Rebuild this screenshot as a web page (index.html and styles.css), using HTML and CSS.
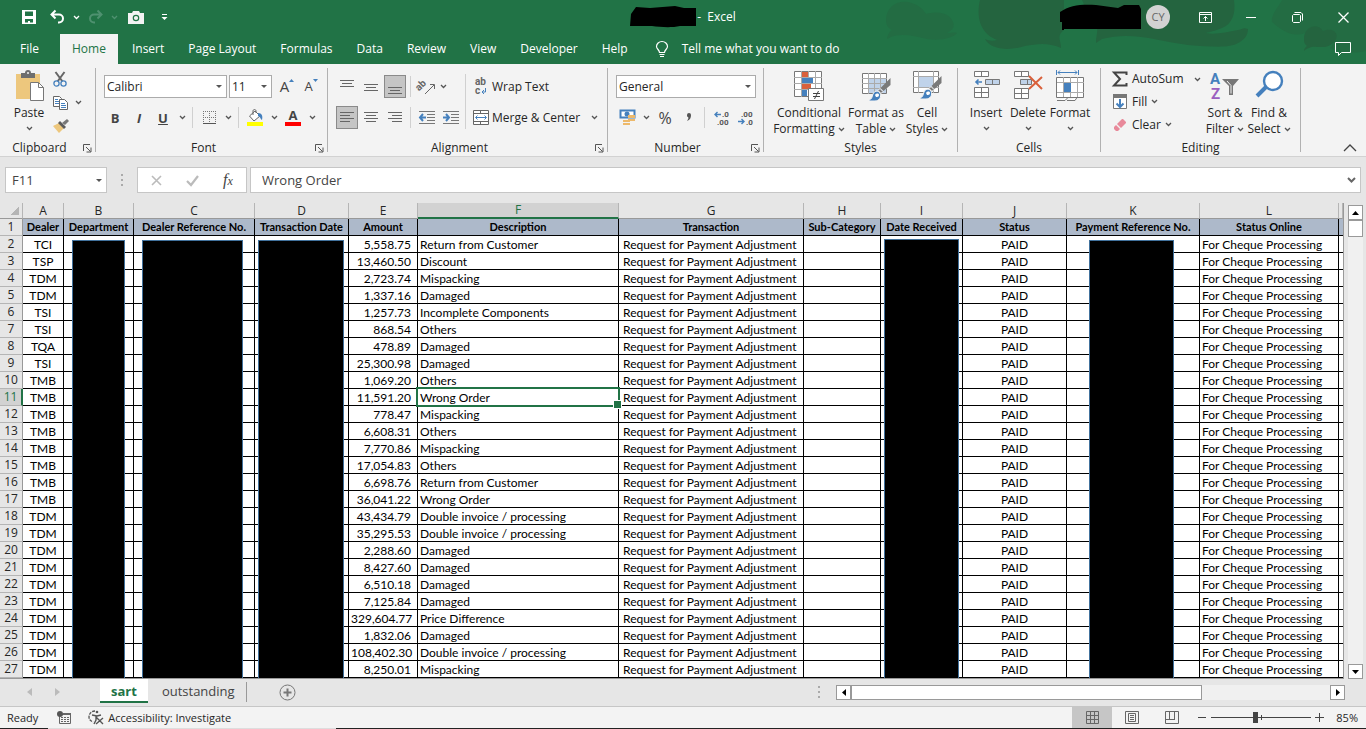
FILE: index.html
```html
<!DOCTYPE html>
<html lang="en">
<head>
	<meta charset="UTF-8">
	<title>Excel</title>
	<link rel="stylesheet" href="styles.css">
</head>
<body>

<svg class="sprite" aria-hidden="true">
	<symbol id="chev" viewBox="0 0 7 5"><path d="M1 1l2.500 2.500L6 1" fill="none" stroke="currentColor" stroke-width="1.300"/></symbol>
	<symbol id="launch" viewBox="0 0 9 9"><path d="M.5 7V.5H7M3 3l4.500 4.500M8 3.500V8H3.500" fill="none" stroke="#555"/></symbol>
	<symbol id="brush" viewBox="0 0 24 24"><path d="M22.500 0v7l-7 6-3-3z" fill="#7a7a7a"/><path d="M12 10.500l3 3-2 2-3-3z" fill="#7a7a7a" stroke="#f3f3f3"/><path d="M1 22c3-1 3-3 4-6 1-3 5-4 7-1 2 4-1 8-5 8H1z" fill="#4580bd" stroke="#f3f3f3"/><path d="M7 17c1-2 4-2 4 0s-2 2-3 2z" fill="#fff"/></symbol>
</svg>

<header class="top">
	<svg class="art" viewBox="0 0 486 64" aria-hidden="true">
		<path d="M6 20C6 8 16 0 28 2c10 2 16 8 18 12 14-4 24 0 27 8 2 6-1 8-6 11 4 0 8-1 10 0-4 5-16 8-30 6-14-3-28-7-40 0 1-5 2-7 5-9-4-2-6-5-6-10z" fill="#236c43"/>
		<path d="M100 0h84v30c-8 6-3 10-3 18-14-6-24-4-36-2-16 5-34 4-40-7 4 2 8 2 12 1-20-8-20-28-17-40z" fill="#24643f"/>
		<path d="M202 0h152c2 14-2 24-12 28-8 3-12 4-16 5 10 2 20-1 32-3 5-1 5-3 10-1 0 8-6 12-10 14-8 5-24 4-50 2-30-4-56-14-86-6-2 1-4 3-6 4 0-10 4-14-2-21-8-10-8-14-12-22z" fill="#24643f"/>
		<path d="M392 22c-1-8 6-14 10-22h84v51c-14 3-26 2-36-3 6-5 4-12-5-13-3-10-16-12-20-2-12 4-20 0-33-11z" fill="#236c43"/>
		<path d="M424 40c-1-14 14-18 19-9 12-5 18 5 10 12-8 8-18 1-24 5-3 1-4 2-5 3 0-3 2-4 3-5-2-2-3-3-3-6z" fill="#24643f"/>
	</svg>
	<div class="titlebar">
		<div class="quick">
			<button aria-label="Save"><svg width="14" height="14"><path d="M0 0h14v14H0zM3 1.500v4.500h8V1.500zM3 9v3.500h3V11h2v1.500h3V9z" fill="#fff" fill-rule="evenodd"/></svg></button>
			<button aria-label="Undo"><svg width="15" height="14"><path d="M1 4.500h8a4 4 0 0 1 0 8H8M5.500.500l-4 4 4 4" fill="none" stroke="#fff" stroke-width="2"/></svg></button>
			<button class="drop" aria-label="Undo list"><svg width="7" height="5"><use href="#chev"/></svg></button>
			<button class="off" aria-label="Redo"><svg width="15" height="14"><path d="M14 4.500H6a4 4 0 0 0 0 8h1M9.500.500l4 4-4 4" fill="none" stroke="currentColor" stroke-width="2"/></svg></button>
			<button class="drop off" aria-label="Redo list"><svg width="7" height="5"><use href="#chev"/></svg></button>
			<button class="camera" aria-label="Camera"><svg width="16" height="13"><path d="M0 2h4l1-2h6l1 2h4v11H0z" fill="#f3f3f3"/><circle cx="8" cy="7" r="2.700" fill="none" stroke="#217346" stroke-width="1.200"/></svg></button>
			<button aria-label="Customize"><svg width="7" height="7"><path d="M1 .500h5" stroke="#fff"/><path d="M.500 3h6l-3 3z" fill="#fff"/></svg></button>
		</div>
		<div class="doc">
			<svg width="67" height="22" aria-hidden="true"><path d="M1 8L6 1l14 1L45 0l9 2h12v18H50c-9 2-20 1-28 0H0z"/></svg>
			<span>-&nbsp; Excel</span>
		</div>
		<div class="account">
			<svg width="82" height="26" aria-hidden="true"><path d="M0 8C10 1 22 0 36 1l22 3 6-3h15l2 4v20H4v1H2v-8H0z"/></svg>
			<span class="avatar">CY</span>
			<div class="window">
				<button aria-label="Ribbon display"><svg width="13" height="11"><path d="M.500.500h12v10H.500zM0 2.500h13M6.500 9V4.500M4.500 6.500l2-2 2 2" fill="none" stroke="#fff"/></svg></button>
				<button aria-label="Minimize"><svg width="10" height="11"><path d="M0 5.500h10" stroke="#fff"/></svg></button>
				<button aria-label="Restore"><svg width="11" height="11"><path d="M.500 3.500l1-1h6l1 1v6l-1 1h-6l-1-1zM2.500.500h6.500l1.500 1.500v6.500" fill="none" stroke="#fff"/></svg></button>
				<button aria-label="Close"><svg width="11" height="11"><path d="M.500.500l10 10M10.500.500l-10 10" stroke="#fff" stroke-width="1.300"/></svg></button>
			</div>
		</div>
	</div>
	<nav class="tabs">
		<a href="#" class="file">File</a>
		<a href="#" class="active">Home</a>
		<a href="#">Insert</a>
		<a href="#">Page Layout</a>
		<a href="#">Formulas</a>
		<a href="#">Data</a>
		<a href="#">Review</a>
		<a href="#">View</a>
		<a href="#">Developer</a>
		<a href="#">Help</a>
		<a href="#" class="tell"><svg width="12" height="17"><path d="M3.500 11.500C3.500 9 .500 8 .500 5.500a5.500 5 0 0 1 11 0c0 2.500-3 3.500-3 6zM3.500 13.500h5M4 15.500h4" fill="none" stroke="#fff" stroke-width="1.200"/></svg>Tell me what you want to do</a>
		<button class="comments" aria-label="Comments"><svg width="16" height="15"><path d="M.500.500h15v10H6.500l-3 3v-3h-3z" fill="none" stroke="#fff"/></svg></button>
	</nav>
</header>

<section class="ribbon">
	<div class="group clipboard">
		<div class="body">
			<button class="big"><svg width="30" height="32"><path d="M2 4h24v25H2z" fill="#edc77d"/><path d="M7 8V3h4a3 3 0 0 1 6 0h4v5z" fill="#6e6e6e"/><circle cx="14" cy="3" r="1" fill="#f3f3f3"/><path d="M16.500 12.500h8l5 5v13h-13z" fill="#fff" stroke="#777"/><path d="M24.500 12.500v5h5" fill="none" stroke="#777"/></svg><span>Paste</span><svg class="chev" width="7" height="5"><use href="#chev"/></svg></button>
			<div class="stack">
				<button aria-label="Cut"><svg width="14" height="15"><path d="M2.500 0l7 9.500M11.500 0l-7 9.500" stroke="#666" stroke-width="2"/><circle cx="3.500" cy="11.500" r="2.600" fill="#f3f3f3" stroke="#4580bd" stroke-width="1.300"/><circle cx="10.500" cy="11.500" r="2.600" fill="#f3f3f3" stroke="#4580bd" stroke-width="1.300"/></svg></button>
				<button aria-label="Copy"><svg width="15" height="14"><path d="M.500.500h6l2 2v8h-8z" fill="#fff" stroke="#666"/><path d="M2 3.500h3M2 5.500h4M2 7.500h4" stroke="#4580bd"/><path d="M6.500 3.500h5l3 3v7h-8z" fill="#fff" stroke="#666"/><path d="M8 7.500h4M8 9.500h5M8 11.500h5" stroke="#4580bd"/></svg><svg class="chev" width="7" height="5"><use href="#chev"/></svg></button>
				<button aria-label="Format painter"><svg width="16" height="14"><path d="M0 7l6-3 5 5-5 5z" fill="#edc77d"/><path d="M5 4l2-2 6 6-2 2z" fill="#5c5c5c"/><path d="M9 4l5-4 2 2-4 4z" fill="#777"/></svg></button>
			</div>
		</div>
		<div class="foot"><span>Clipboard</span><button class="launch" aria-label="Clipboard options"><svg width="9" height="9"><use href="#launch"/></svg></button></div>
	</div>

	<div class="group font">
		<div class="body rows">
			<div class="row">
				<select class="face" aria-label="Font"><option>Calibri</option></select>
				<select class="size" aria-label="Font size"><option>11</option></select>
				<button class="tool grow" aria-label="Increase font size">A<svg width="5" height="3"><path d="M0 3L2.500 0 5 3z" fill="#4580bd"/></svg></button>
				<button class="tool shrink" aria-label="Decrease font size">A<svg width="5" height="3"><path d="M0 0h5L2.500 3z" fill="#4580bd"/></svg></button>
			</div>
			<div class="row">
				<button class="tool"><b>B</b></button>
				<button class="tool"><b><i>I</i></b></button>
				<button class="tool"><b><u>U</u></b></button>
				<button class="arrow" aria-label="Underline list"><svg width="7" height="5"><use href="#chev"/></svg></button>
				<i class="sep"></i>
				<button class="tool" aria-label="Borders"><svg width="13" height="13"><path d="M0 .500h13M0 6.500h13M.500 0v13M6.500 0v13M12.500 0v13" stroke="#777" stroke-dasharray="1 1"/><path d="M0 12.500h13" stroke="#555"/></svg></button>
				<button class="arrow" aria-label="Border list"><svg width="7" height="5"><use href="#chev"/></svg></button>
				<i class="sep"></i>
				<button class="tool" aria-label="Fill color"><svg width="16" height="17"><path d="M2.500 7L8 2l5 5-6 5z" fill="#fff" stroke="#666"/><path d="M6 6V2c0-2 3-2 3 0v2" fill="none" stroke="#666"/><path d="M11 4c4 0 5 3 4 7-2-1-1-3-4-4z" fill="#4580bd"/><path d="M0 13h16v4H0z" fill="#ff0"/></svg></button>
				<button class="arrow" aria-label="Fill colors"><svg width="7" height="5"><use href="#chev"/></svg></button>
				<button class="tool color" aria-label="Font color">A</button>
				<button class="arrow" aria-label="Font colors"><svg width="7" height="5"><use href="#chev"/></svg></button>
			</div>
		</div>
		<div class="foot"><span>Font</span><button class="launch" aria-label="Font options"><svg width="9" height="9"><use href="#launch"/></svg></button></div>
	</div>

	<div class="group align">
		<div class="body">
			<div class="rows">
				<div class="row">
					<button class="tool" aria-label="Top align"><svg width="14" height="14"><path d="M0 .500h14M2 3.500h10M0 6.500h14" stroke="#666"/></svg></button>
					<button class="tool" aria-label="Middle align"><svg width="14" height="14"><path d="M0 4.500h14M2 7.500h10M0 10.500h14" stroke="#666"/></svg></button>
					<button class="tool on" aria-label="Bottom align"><svg width="14" height="14"><path d="M0 7.500h14M2 10.500h10M0 13.500h14" stroke="#666"/></svg></button>
					<i class="sep"></i>
					<button class="tool" aria-label="Orientation"><svg width="17" height="16"><text class="ab" x="-1" y="8" transform="rotate(-45 5 9)">ab</text><path d="M6 15l9-9M11 5.500h4.500V10" fill="none" stroke="#666"/></svg></button>
					<button class="arrow near" aria-label="Orientation list"><svg width="7" height="5"><use href="#chev"/></svg></button>
				</div>
				<div class="row">
					<button class="tool on" aria-label="Align left"><svg width="14" height="12"><path d="M0 .500h14M0 3.500h10M0 6.500h14M0 9.500h10" stroke="#666"/></svg></button>
					<button class="tool" aria-label="Center"><svg width="14" height="12"><path d="M0 .500h14M2 3.500h10M0 6.500h14M2 9.500h10" stroke="#666"/></svg></button>
					<button class="tool" aria-label="Align right"><svg width="14" height="12"><path d="M0 .500h14M4 3.500h10M0 6.500h14M4 9.500h10" stroke="#666"/></svg></button>
					<i class="sep"></i>
					<button class="tool" aria-label="Decrease indent"><svg width="16" height="13"><path d="M0 .500h16M8 3.500h8M8 6.500h8M8 9.500h8M0 12.500h16" stroke="#777"/><path d="M7 6.500H1M4 3L1 6.500 4 10" fill="none" stroke="#4580bd" stroke-width="2"/></svg></button>
					<button class="tool" aria-label="Increase indent"><svg width="16" height="13"><path d="M0 .500h16M8 3.500h8M8 6.500h8M8 9.500h8M0 12.500h16" stroke="#777"/><path d="M0 6.500h6M3 3l3 3.500L3 10" fill="none" stroke="#4580bd" stroke-width="2"/></svg></button>
				</div>
			</div>
			<i class="sep tall"></i>
			<div class="rows">
				<button class="row text"><svg width="16" height="16"><text class="ab" x="2" y="6">ab</text><text class="ab" x="2" y="15">c</text><path d="M12.500 9v4H9M11 11l-2 2 2 2" fill="none" stroke="#4580bd"/></svg>Wrap Text</button>
				<button class="row text"><svg width="16" height="15"><path d="M.500.500h15v14H.500z" fill="#fff" stroke="#666"/><path d="M0 3.500h16M0 11.500h16M7.500 0v3M7.500 12v3" stroke="#666"/><path d="M3 7.500h10M4.500 5.500l-2 2 2 2M11.500 5.500l2 2-2 2" fill="none" stroke="#4580bd"/></svg>Merge &amp; Center<svg class="chev" width="7" height="5"><use href="#chev"/></svg></button>
			</div>
		</div>
		<div class="foot"><span>Alignment</span><button class="launch" aria-label="Alignment options"><svg width="9" height="9"><use href="#launch"/></svg></button></div>
	</div>

	<div class="group number">
		<div class="body rows">
			<div class="row"><select class="format" aria-label="Number format"><option>General</option></select></div>
			<div class="row">
				<button class="tool" aria-label="Accounting format"><svg width="17" height="17"><path d="M1.500 1.500h14v7h-14z" fill="#fff" stroke="#4580bd" stroke-width="2"/><circle cx="8" cy="5" r="2.500" fill="#4580bd"/><path d="M9 6h7v3H9zM9 10h7v2H9zM4 11h7v2H4zM4 14h7v2H4z" fill="#edb96b"/></svg></button>
				<button class="arrow" aria-label="Accounting list"><svg width="7" height="5"><use href="#chev"/></svg></button>
				<button class="tool pct">%</button>
				<button class="tool" aria-label="Comma style"><svg width="6" height="9"><path d="M1 2a2 2 0 0 1 4 0c0 3-1 5-4 6 1-2 2-3 1-4-1 0-1-1-1-2z" fill="#555"/></svg></button>
				<i class="sep"></i>
				<button class="tool" aria-label="Increase decimal"><svg width="15" height="14"><text class="dec" x="8" y="6">.0</text><text class="dec" x="3" y="14">.00</text><path d="M7 3.500H1M3.500 1L1 3.500 3.500 6" fill="none" stroke="#4580bd" stroke-width="1.400"/></svg></button>
				<button class="tool" aria-label="Decrease decimal"><svg width="15" height="14"><text class="dec" x="3" y="6">.00</text><text class="dec" x="8" y="14">.0</text><path d="M0 10.500h6M3.500 8L6 10.500 3.500 13" fill="none" stroke="#4580bd" stroke-width="1.400"/></svg></button>
			</div>
		</div>
		<div class="foot"><span>Number</span><button class="launch" aria-label="Number options"><svg width="9" height="9"><use href="#launch"/></svg></button></div>
	</div>

	<div class="group styles">
		<div class="body">
			<button class="big w76"><svg width="30" height="32"><path d="M.500 1.500h27v25H.500z" fill="#fff" stroke="#777"/><path d="M0 7.500h28M0 13.500h28M0 19.500h28M7.500 1v26M14.500 1v26M21.500 1v26" stroke="#aaa"/><path d="M8 2h6v5H8zM8 14h9v5H8z" fill="#d9603b"/><path d="M8 8h11v5H8zM8 20h5v6H8z" fill="#4580bd"/><path d="M14.500 18.500h15v12h-15z" fill="#fff" stroke="#777"/><path d="M19 23.500h7M19 26.500h7M24.500 21l-4 8" stroke="#444"/></svg><span>Conditional</span><span>Formatting <svg class="chev" width="7" height="5"><use href="#chev"/></svg></span></button>
			<button class="big w58"><svg width="30" height="32"><path d="M1.500 3.500h24v20h-24z" fill="#fff" stroke="#777"/><path d="M8 9h17v14H8z" fill="#c0d3ea"/><path d="M1 8.500h25M1 13.500h25M1 18.500h25M7.500 3v21M13.500 3v21M19.500 3v21" stroke="#aaa"/><use href="#brush" x="7" y="8" width="24" height="24"/></svg><span>Format as</span><span>Table <svg class="chev" width="7" height="5"><use href="#chev"/></svg></span></button>
			<button class="big w44"><svg width="30" height="32"><path d="M1.500 1.500h25v21h-25z" fill="#fff" stroke="#777"/><path d="M6.500 1v22M21.500 1v22M1 6.500h26M1 17.500h26" stroke="#aaa"/><path d="M7 7h14v10H7z" fill="#c0d3ea"/><use href="#brush" x="7" y="6" width="24" height="24"/></svg><span>Cell</span><span>Styles <svg class="chev" width="7" height="5"><use href="#chev"/></svg></span></button>
		</div>
		<div class="foot"><span>Styles</span></div>
	</div>

	<div class="group cells">
		<div class="body">
			<button class="big w42"><svg width="28" height="32"><path d="M2.500 1.500h14v5h-14zM9.500 1v6M2.500 17.500h14v10h-14zM9.500 17v11M2 22.500h15" fill="#fff" stroke="#777"/><path d="M13.500 9.500h14v5h-14zM20.500 9v6" fill="#c0d3ea" stroke="#777"/><path d="M10 12H4M6.500 9.500L4 12l2.500 2.500" fill="none" stroke="#4580bd" stroke-width="1.600"/></svg><span>Insert</span><svg class="chev" width="7" height="5"><use href="#chev"/></svg></button>
			<button class="big w42"><svg width="30" height="32"><path d="M1.500 1.500h14v5h-14zM8.500 1v6M1.500 18.500h14v10h-14zM8.500 18v11M1 23.500h15" fill="#fff" stroke="#777"/><path d="M7.500 9.500h11v5h-11zM14.500 9v6" fill="#c0d3ea" stroke="#777"/><path d="M16 6l13 13M29 7L16 19" stroke="#d9603b" stroke-width="2"/></svg><span>Delete</span><svg class="chev" width="7" height="5"><use href="#chev"/></svg></button>
			<button class="big w42"><svg width="28" height="32"><path d="M.500 0v5M22.500 0v5M2 2.500h19M4 .500l-2 2 2 2M19 .500l2 2-2 2" fill="none" stroke="#4580bd"/><path d="M.500 7.500h27v20H.500zM1 30.500h8l3-3M11 30.500h8l2-3" fill="#fff" stroke="#777"/><path d="M7.500 7v20M14.500 7v20M21.500 7v20M1 12.500h27M1 22.500h27" stroke="#aaa"/><path d="M8 13h7v9H8z" fill="#4580bd"/></svg><span>Format</span><svg class="chev" width="7" height="5"><use href="#chev"/></svg></button>
		</div>
		<div class="foot"><span>Cells</span></div>
	</div>

	<div class="group editing">
		<div class="body">
			<div class="list">
				<button class="sum"><svg width="16" height="16"><path d="M14.500 4V1.500H2l6 6.500-6 6.500h12.500V12" fill="none" stroke="#444" stroke-width="2"/></svg>AutoSum<svg class="chev" width="7" height="5"><use href="#chev"/></svg></button>
				<button><svg width="16" height="16"><path d="M1.500.500h13v14h-13z" fill="#fff" stroke="#777"/><path d="M1 0h14v4H1z" fill="#777"/><path d="M8 5v8M4.500 9.500L8 13l3.500-3.500" fill="none" stroke="#4580bd" stroke-width="2"/></svg>Fill<svg class="chev" width="7" height="5"><use href="#chev"/></svg></button>
				<button><svg width="16" height="14"><path d="M5 6l5-5h1l3 3v1l-5 5z" fill="#e8899a"/><path d="M4 7l4 4-2 2H4L2 11V9z" fill="#e8899a"/></svg>Clear<svg class="chev" width="7" height="5"><use href="#chev"/></svg></button>
			</div>
			<button class="big w42"><svg width="30" height="32"><text class="az a" x="0" y="14">A</text><text class="az z" x="1" y="29">Z</text><path d="M12 9h17l-6 7v9h-4v-9z" fill="#777"/><path d="M17 11l4 4.500v8" stroke="#f3f3f3" fill="none"/></svg><span>Sort &amp;</span><span>Filter <svg class="chev" width="7" height="5"><use href="#chev"/></svg></span></button>
			<button class="big w46"><svg width="28" height="32"><path d="M11 17L2 26" stroke="#4580bd" stroke-width="4"/><circle cx="18" cy="11" r="9" fill="#fff" stroke="#4580bd" stroke-width="2.400"/></svg><span>Find &amp;</span><span>Select <svg class="chev" width="7" height="5"><use href="#chev"/></svg></span></button>
		</div>
		<div class="foot"><span>Editing</span></div>
	</div>
	<button class="collapse" aria-label="Collapse ribbon"><svg width="14" height="8"><path d="M1 7l6-6 6 6" fill="none" stroke="#444" stroke-width="1.300"/></svg></button>
</section>

<section class="formula">
	<select class="name" aria-label="Name box"><option>F11</option></select>
	<i class="dots"></i>
	<div class="actions">
		<button aria-label="Cancel"><svg width="11" height="11"><path d="M1 1l9 9M10 1l-9 9" stroke="#bbb" stroke-width="1.600"/></svg></button>
		<button aria-label="Enter"><svg width="13" height="11"><path d="M1 6l4 4 7-9" fill="none" stroke="#bbb" stroke-width="2.200"/></svg></button>
		<button class="fx"><i>f<small>x</small></i></button>
	</div>
	<div class="entry">
		<input type="text" value="Wrong Order" aria-label="Formula">
		<svg width="9" height="6"><path d="M1 1l3.500 3.500L8 1" fill="none" stroke="#666" stroke-width="2"/></svg>
	</div>
</section>

<main class="work">
	<div class="sheet">
		<table>
			<colgroup>
				<col class="c-num"><col class="c-a"><col class="c-b"><col class="c-c"><col class="c-d"><col class="c-e"><col class="c-f">
				<col class="c-g"><col class="c-h"><col class="c-i"><col class="c-j"><col class="c-k"><col class="c-l"><col>
			</colgroup>
			<thead>
				<tr><th class="corner"></th><th>A</th><th>B</th><th>C</th><th>D</th><th>E</th><th class="picked">F</th><th>G</th><th>H</th><th>I</th><th>J</th><th>K</th><th>L</th><th></th></tr>
			</thead>
			<tbody id="rows">
				<tr class="head"><th>1</th><td>Dealer</td><td>Department</td><td>Dealer Reference No.</td><td>Transaction Date</td><td>Amount</td><td>Description</td><td>Transaction</td><td>Sub-Category</td><td>Date Received</td><td>Status</td><td>Payment Reference No.</td><td>Status Online</td><td></td></tr>
			</tbody>
		</table>
		<div class="mask mask-b"></div>
		<div class="mask mask-c"></div>
		<div class="mask mask-d"></div>
		<div class="mask mask-i"></div>
		<div class="mask mask-k"></div>
	</div>
	<div class="vscroll">
		<button aria-label="Scroll up"><svg width="7" height="4"><path d="M0 4l3.500-4L7 4z"/></svg></button>
		<i class="thumb"></i>
		<button class="down" aria-label="Scroll down"><svg width="7" height="4"><path d="M0 0h7L3.500 4z"/></svg></button>
	</div>
</main>

<section class="sheets">
	<button class="nav" aria-label="Previous sheet"><svg width="5" height="8"><path d="M5 0v8L0 4z" fill="#bbb"/></svg></button>
	<button class="nav" aria-label="Next sheet"><svg width="5" height="8"><path d="M0 0v8l5-4z" fill="#bbb"/></svg></button>
	<a href="#" class="current">sart</a>
	<a href="#" class="other">outstanding</a>
	<button class="add" aria-label="New sheet"><svg width="17" height="17"><circle cx="8.500" cy="8.500" r="7.500" fill="none" stroke="#777"/><path d="M8.500 4.500v8M4.500 8.500h8" stroke="#777" stroke-width="2"/></svg></button>
	<i class="dots"></i>
	<div class="hscroll">
		<button aria-label="Scroll left"><svg width="4" height="7"><path d="M4 0v7L0 3.500z"/></svg></button>
		<i class="thumb"></i>
		<button class="right" aria-label="Scroll right"><svg width="4" height="7"><path d="M0 0v7l4-3.500z"/></svg></button>
	</div>
</section>

<footer class="status">
	<span class="ready">Ready</span>
	<button class="macro" aria-label="Record macro"><svg width="14" height="13"><path d="M2.500 3.500h11v9h-11z" fill="none" stroke="#666"/><path d="M4 6.500h8M4 8.500h8M4 10.500h8" stroke="#666" stroke-dasharray="2 1"/><path d="M6 2h8v2H6z" fill="#666"/><circle cx="3" cy="3" r="3" fill="#555"/></svg></button>
	<button class="access"><svg width="16" height="15"><path d="M7 1C3 1 1 4 1 7s2 4 4 5" fill="none" stroke="#555" stroke-dasharray="3 1" stroke-width="1.300"/><circle cx="9" cy="2" r="1.300" fill="#555"/><path d="M4 5l5 1 4-1M8 6v4l-2 4M8 7l7 7M15 8l-7 6" fill="none" stroke="#555" stroke-width="1.400"/></svg>Accessibility: Investigate</button>
	<div class="views">
		<button class="on" aria-label="Normal"><svg width="13" height="13"><path d="M.500.500h12v12H.500zM4.500 0v13M8.500 0v13M0 4.500h13M0 8.500h13" fill="none" stroke="#666"/></svg></button>
		<button aria-label="Page layout"><svg width="14" height="13"><path d="M.500.500h13v12H.500zM3.500 2.500h7v8h-7zM5 4.500h4M5 6.500h4M5 8.500h4" fill="none" stroke="#666"/></svg></button>
		<button aria-label="Page break preview"><svg width="14" height="13"><path d="M.500.500h13v12H.500zM4.500 0v8M9.500 0v8M0 8.500h10" fill="none" stroke="#666"/></svg></button>
	</div>
	<div class="zoom">
		<button aria-label="Zoom out"><svg width="8" height="9"><path d="M0 4.500h8" stroke="#444"/></svg></button>
		<input type="range" min="10" max="180" value="85" aria-label="Zoom">
		<button aria-label="Zoom in"><svg width="9" height="9"><path d="M0 4.500h9M4.500 0v9" stroke="#444"/></svg></button>
		<span>85%</span>
	</div>
</footer>

<script src="script.js"></script>
</body>
</html>
```
FILE: styles.css
```css
*{
	box-sizing: border-box;
}
:root{
	--green:#217346;
	--bar:#e6e6e6;
	--ribbon:#f3f3f3;
	--line:#ababab;
}
body{
	display: flex;
	flex-direction: column;
	height: 100vh;
	margin: 0;
	overflow: hidden;
	background: var(--bar);
	color: #262626;
	font: 12px/16px "Open Sans", "Noto Sans", sans-serif;
}
button{
	display: flex;
	align-items: center;
	justify-content: center;
	padding: 0;
	border: 0;
	background: none;
	color: inherit;
	font: inherit;
	white-space: nowrap;
}
svg{
	flex: none;
	overflow: visible;
}
a{
	color: inherit;
	text-decoration: none;
}
.sprite{
	display: none;
}
.chev{
	color: #555;
}

/* title bar */
.top{
	position: relative;
	flex: none;
	background: var(--green);
	color: #fff;
}
.art{
	position: absolute;
	top: 0;
	right: 0;
	width: 486px;
	height: 64px;
	overflow: hidden;
}
.titlebar{
	position: relative;
	display: grid;
	grid-template-columns: 1fr auto 1fr;
	align-items: center;
	height: 34px;
}
.quick{
	display: flex;
	padding-left: 15px;
}
.quick button{
	width: 28px;
	height: 34px;
}
.quick .drop{
	width: 10px;
}
.quick .off{
	color: #4f9170;
}
.quick .camera{
	margin-left: 3px;
}
.doc{
	display: flex;
	align-items: center;
}
.account{
	display: flex;
	justify-content: flex-end;
	align-items: center;
	gap: 4px;
}
.avatar{
	width: 24px;
	height: 24px;
	border-radius: 50%;
	background: #d2d2d2;
	color: #666;
	font-size: 11px;
	line-height: 24px;
	text-align: center;
}
.window{
	display: flex;
	align-self: flex-start;
	margin-left: 8px;
}
.window button{
	width: 46px;
	height: 30px;
}
.tabs{
	position: relative;
	display: flex;
	height: 30px;
	padding: 0 15px 0 8px;
}
.tabs a{
	padding: 0 12px;
	line-height: 30px;
}
.tabs .file{
	margin-right: 9px;
}
.tabs .active{
	margin-right: 2px;
	background: var(--ribbon);
	color: var(--green);
}
.tabs .tell{
	display: flex;
	align-items: center;
	gap: 14px;
	padding-left: 16px;
}
.comments{
	margin-left: auto;
}

/* ribbon */
.ribbon{
	display: flex;
	flex: none;
	height: 93px;
	padding: 4px 0;
	border-bottom: 1px solid #d2d2d2;
	background: var(--ribbon);
}
.group{
	display: flex;
	flex: none;
	flex-direction: column;
	border-right: 1px solid #b1b1b1;
}
.body{
	display: flex;
	flex: 1;
	padding-left: 7px;
}
.foot{
	display: flex;
	align-items: center;
	height: 16px;
	margin: -4px 0;
}
.foot span{
	flex: 1;
	text-align: center;
}
.launch{
	width: 16px;
}
.clipboard{
	width: 96px;
}
.font{
	width: 232px;
}
.align{
	width: 280px;
}
.number{
	width: 156px;
}
.styles{
	width: 194px;
}
.cells{
	width: 143px;
}
.editing{
	width: 200px;
}
.big{
	flex-direction: column;
	justify-content: flex-start;
	padding-top: 2px;
}
.big > svg:first-child{
	margin-bottom: 3px;
}
.big > .chev{
	margin-top: 5px;
}
.big .chev{
	vertical-align: middle;
}
.clipboard .big{
	width: 44px;
}
.w76{
	width: 76px;
}
.w58{
	width: 58px;
}
.w44{
	width: 44px;
}
.w42{
	width: 42px;
}
.w46{
	width: 46px;
}
.stack button{
	gap: 7px;
	justify-content: flex-start;
	width: 40px;
	height: 23px;
	padding-left: 2px;
}
.rows{
	display: flex;
	flex-direction: column;
	gap: 8px;
	padding-top: 7px;
}
.row{
	display: flex;
	align-items: center;
	height: 23px;
}
.tool{
	width: 22px;
	height: 23px;
	margin: 0 1px;
	color: #444;
	font-size: 13px;
}
.tool.on{
	border: 1px solid #8a8a8a;
	background: #c5c5c5;
}
.arrow{
	width: 14px;
	height: 23px;
	color: #555;
}
.arrow.near{
	width: 8px;
}
.sep{
	width: 1px;
	height: 21px;
	margin: 0 4px 0 3px;
	background: #d0d0d0;
}
.sep.tall{
	height: 55px;
	margin: 6px 7px 0 2px;
}
select{
	height: 23px;
	padding: 0 2px;
	border: 1px solid var(--line);
	border-radius: 0;
	appearance: none;
	background: #fff url("data:image/svg+xml,%3Csvg xmlns='http://www.w3.org/2000/svg' width='6' height='3'%3E%3Cpath d='M0 0h6L3 3z' fill='%23555'/%3E%3C/svg%3E") no-repeat right 4px center;
	color: #262626;
	font: inherit;
}
.face{
	width: 123px;
	margin-left: 1px;
}
.size{
	width: 43px;
	margin: 0 3px 0 2px;
}
.format{
	width: 140px;
	margin-left: 1px;
}
.grow, .shrink{
	align-items: flex-start;
	font-size: 15px;
	line-height: 23px;
}
.shrink{
	font-size: 13px;
}
.grow svg, .shrink svg{
	margin-top: 4px;
}
.color{
	width: 16px;
	height: 17px;
	margin: 0 4px;
	border-bottom: 4px solid #f00;
	font-weight: bold;
	line-height: 13px;
}
.text{
	justify-content: flex-start;
	gap: 3px;
}
.text .chev{
	margin-left: 8px;
}
.ab{
	font: bold 10px/10px Roboto, sans-serif;
	fill: #666;
}
.dec{
	font: bold 8px/8px Roboto, sans-serif;
	fill: #555;
}
.pct{
	font-size: 16px;
}
.list{
	width: 96px;
	padding-left: 4px;
}
.list button{
	gap: 4px;
	height: 23px;
}
.list .sum{
	height: 22px;
}
.list .sum .chev{
	margin-left: 6px;
}
.az{
	font: bold 15px/15px Roboto, sans-serif;
}
.a{
	fill: #4580bd;
}
.z{
	fill: #9b5fc0;
}
.collapse{
	align-self: flex-end;
	margin: 0 9px 0 auto;
}

/* formula bar */
.formula{
	display: flex;
	flex: none;
	height: 46px;
	padding: 10px 5px;
	color: #444;
	font-size: 13px;
}
.formula > *{
	height: 26px;
}
.name{
	width: 102px;
	padding: 0 6px;
	border-color: #c6c6c6;
	color: #444;
}
.dots{
	width: 2px;
	background: linear-gradient(#aaa 2px, transparent 0) 0 0 / 2px 5px;
}
.formula .dots{
	height: 12px;
	margin: 7px 14px 0;
}
.actions, .entry{
	display: flex;
	border: 1px solid #c6c6c6;
	background: #fff;
}
.actions{
	width: 110px;
	margin-right: 3px;
}
.actions button{
	flex: 1;
}
.fx{
	font: 16px "Liberation Serif", serif;
}
.fx small{
	font-size: 12px;
}
.entry{
	flex: 1;
	align-items: center;
	padding: 0 4px 0 11px;
}
.entry input{
	flex: 1;
	padding: 0;
	border: 0;
	outline: 0;
	background: none;
	color: #444;
	font: inherit;
}

/* grid */
.work{
	display: flex;
	flex: 1;
	min-height: 0;
}
.sheet{
	position: relative;
	flex: 1;
	overflow: hidden;
	border-right: 1px solid #999;
	border-bottom: 1px solid #999;
}
table{
	width: 100%;
	table-layout: fixed;
	border-spacing: 0;
	color: #000;
	font: 12px/14px Lato, sans-serif;
}
th, td{
	height: 17px;
	padding: 2px 2px 0;
	white-space: nowrap;
}
td{
	border-right: 1px solid #000;
	border-bottom: 1px solid #000;
	background: #fff;
	text-align: center;
}
td:last-child{
	border-right: 0;
}
th{
	padding: 0;
	border-right: 1px solid #b5b5b5;
	border-bottom: 1px solid #b5b5b5;
	background: var(--bar);
	color: #262626;
	font: 12px/16px "Open Sans", sans-serif;
}
thead th{
	height: 16px;
	border-bottom-color: #999;
	line-height: 14px;
}
tbody th{
	border-right-color: #999;
}
.corner{
	background: linear-gradient(135deg, transparent 50%, #b5b5b5 0) no-repeat right 3px bottom 3px / 9px 9px;
}
th.picked{
	background: #d2d2d2;
	color: var(--green);
}
thead .picked{
	border-bottom: 2px solid var(--green);
}
tbody .picked{
	border-right: 2px solid var(--green);
}
.head td{
	padding: 0;
	background: #adb9ca;
	font-size: 11px;
	font-weight: bold;
}
.num{
	padding-right: 6px;
	text-align: right;
}
.left{
	text-align: left;
}
.req{
	padding-left: 4px;
	text-align: left;
}
.selected{
	position: relative;
}
.selected:before{
	position: absolute;
	inset: -2px;
	border: 2px solid var(--green);
	content: "";
}
.selected:after{
	position: absolute;
	right: -4px;
	bottom: -4px;
	width: 7px;
	height: 7px;
	border: 1px solid #fff;
	background: var(--green);
	content: "";
}
.c-num{ width: 23px; }
.c-a{ width: 41px; }
.c-b{ width: 70px; }
.c-c{ width: 121px; }
.c-d{ width: 94px; }
.c-e{ width: 69px; }
.c-f{ width: 201px; }
.c-g{ width: 185px; }
.c-h{ width: 77px; }
.c-i{ width: 82px; }
.c-j{ width: 104px; }
.c-k{ width: 133px; }
.c-l{ width: 139px; }

/* redacted columns */
.mask{
	position: absolute;
	top: 37px;
	bottom: 0;
	border: 1px solid #41719c;
	border-bottom: 0;
	background: #000;
}
.mask-b{
	left: 72px;
	width: 53px;
}
.mask-c{
	left: 142px;
	width: 101px;
}
.mask-d{
	left: 258px;
	width: 86px;
}
.mask-i{
	top: 36px;
	left: 884px;
	width: 75px;
}
.mask-k{
	left: 1089px;
	width: 85px;
}

/* scroll bars */
.vscroll{
	display: flex;
	flex-direction: column;
	width: 15px;
	margin: 2px 3px 0 4px;
	background: #f0f0f0;
}
.vscroll button, .hscroll button{
	flex: none;
	width: 15px;
	height: 15px;
	border: 1px solid #999;
	background: #fff;
}
.thumb{
	border: 1px solid #999;
	background: #fff;
}
.vscroll .thumb{
	height: 17px;
}
.vscroll .down{
	margin-top: auto;
}
.hscroll{
	display: flex;
	width: 509px;
	height: 15px;
	margin: 6px 21px 0 0;
	background: #f0f0f0;
}
.hscroll .thumb{
	width: 351px;
}
.hscroll .right{
	margin-left: auto;
}

/* sheet tabs */
.sheets{
	display: flex;
	flex: none;
	height: 27px;
	padding-left: 15px;
	color: #444;
	font-size: 13px;
	line-height: 25px;
}
.nav{
	width: 28px;
	height: 26px;
}
.current{
	height: 24px;
	margin-left: 29px;
	padding: 0 11px;
	border-bottom: 2px solid var(--green);
	background: #fff;
	color: var(--green);
	font-weight: bold;
}
.other{
	height: 20px;
	margin-top: 3px;
	padding: 0 11px 0 14px;
	border-right: 1px solid #999;
	line-height: 19px;
}
.add{
	height: 26px;
	margin-left: 32px;
}
.sheets .dots{
	height: 12px;
	margin: 7px 16px 0 auto;
}

/* status bar */
.status{
	display: flex;
	flex: none;
	align-items: center;
	height: 23px;
	padding: 0 0 1px 7px;
	border-top: 1px solid #c6c6c6;
	background: linear-gradient(to right, #222 48px, #ddd 0, #ddd 336px, #222 0) bottom / 100% 1px no-repeat var(--ribbon);
	font-size: 11px;
}
.macro{
	margin: 0 17px 0 19px;
}
.access{
	gap: 4px;
}
.views{
	display: flex;
	align-self: stretch;
	margin-left: auto;
}
.views button{
	width: 40px;
}
.views .on{
	background: #c6c6c6;
}
.zoom{
	display: flex;
	align-items: center;
	padding: 0 8px 0 6px;
}
.zoom input{
	width: 100px;
	height: 12px;
	margin: 0 4px 0 5px;
	appearance: none;
	background: linear-gradient(#444, #444) center / 100% 1px no-repeat, linear-gradient(#444, #444) center / 1px 5px no-repeat;
}
.zoom input::-webkit-slider-thumb{
	width: 5px;
	height: 11px;
	appearance: none;
	background: #444;
}
.zoom span{
	margin-left: 12px;
}
```
FILE: script.js
```js
let rows = [
	['TCI','5,558.75','Return from Customer'],
	['TSP','13,460.50','Discount'],
	['TDM','2,723.74','Mispacking'],
	['TDM','1,337.16','Damaged'],
	['TSI','1,257.73','Incomplete Components'],
	['TSI','868.54','Others'],
	['TQA','478.89','Damaged'],
	['TSI','25,300.98','Damaged'],
	['TMB','1,069.20','Others'],
	['TMB','11,591.20','Wrong Order'],
	['TMB','778.47','Mispacking'],
	['TMB','6,608.31','Others'],
	['TMB','7,770.86','Mispacking'],
	['TMB','17,054.83','Others'],
	['TMB','6,698.76','Return from Customer'],
	['TMB','36,041.22','Wrong Order'],
	['TDM','43,434.79','Double invoice / processing'],
	['TDM','35,295.53','Double invoice / processing'],
	['TDM','2,288.60','Damaged'],
	['TDM','8,427.60','Damaged'],
	['TDM','6,510.18','Damaged'],
	['TDM','7,125.84','Damaged'],
	['TDM','329,604.77','Price Difference'],
	['TDM','1,832.06','Damaged'],
	['TDM','108,402.30','Double invoice / processing'],
	['TDM','8,250.01','Mispacking']
];
let active = 11;

let html = rows.map(([dealer,amount,desc],i)=>{
	let n = i + 2;
	let on = n === active;
	return `<tr>
		<th${on ? ' class="picked"' : ''}>${n}</th>
		<td>${dealer}</td><td></td><td></td><td></td>
		<td class="num">${amount}</td>
		<td class="left${on ? ' selected' : ''}">${desc}</td>
		<td class="req">Request for Payment Adjustment</td>
		<td></td><td></td><td>PAID</td><td></td>
		<td class="left">For Cheque Processing</td><td></td>
	</tr>`;
}).join('');
document.querySelector('#rows').insertAdjacentHTML('beforeend',html);
```
